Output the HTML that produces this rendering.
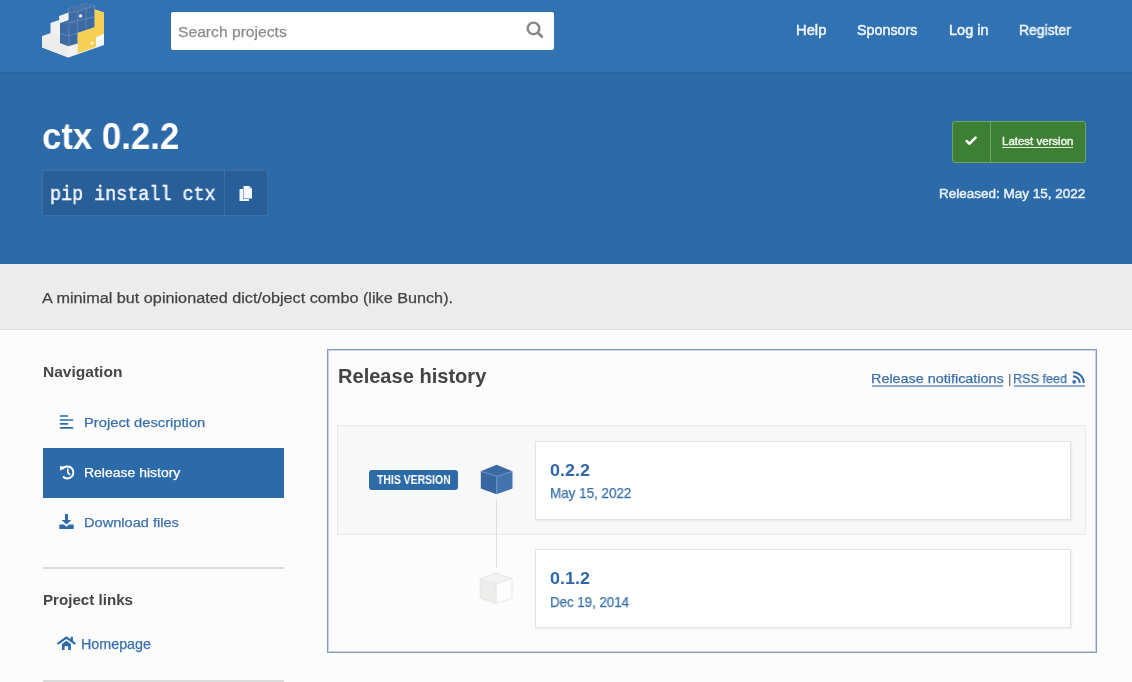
<!DOCTYPE html>
<html><head><meta charset="utf-8">
<style>
*{box-sizing:border-box;margin:0;padding:0}
html,body{width:1132px;height:682px;overflow:hidden;background:#fcfcfc;font-family:"Liberation Sans",sans-serif}
.abs{position:absolute}
.tx{position:absolute;white-space:nowrap;transform-origin:0 0;will-change:transform}
#hdr{left:0;top:0;width:1132px;height:72px;background:#3072b2}
#banner{left:0;top:72px;width:1132px;height:192px;background:#2d6aa8;border-top:1px solid #2b64a0}
#desc{left:0;top:264px;width:1132px;height:66px;background:#ececec;border-bottom:1px solid #e2e2e2}
#search{left:171px;top:12px;width:383px;height:38px;background:#fff;border-radius:2px}
#pip{left:42px;top:170px;width:226px;height:46px;background:#295f99;border:1px solid rgba(255,255,255,.1)}
#pip .d{position:absolute;left:181px;top:-1px;width:1px;height:46px;border-left:1px solid rgba(255,255,255,.1)}
#latest{left:952px;top:121px;width:134px;height:42px;background:#3e7f36;border:1px solid #6ea468;border-radius:3px}
#latest .d{position:absolute;left:37px;top:0;width:1px;height:40px;background:#6ea468}
#hl{left:43px;top:448px;width:241px;height:50px;background:#2d6aa9}
.rule{left:43px;width:241px;height:2px;background:#dcdcdc}
#panel{left:327px;top:349px;width:770px;height:304px;border:1px solid #809bb9;box-shadow:inset 0 0 0 1px rgba(150,175,200,.5);background:#fcfcfc}
#gbox{left:337px;top:425px;width:749px;height:110px;background:#f8f8f8;border:1px solid #e9e9e9}
.card{left:535px;width:536px;height:79px;background:#fff;border:1px solid #e3e3e3;box-shadow:1px 1px 2px rgba(0,0,0,.06)}
#badge{left:369px;top:470px;width:89px;height:20px;background:#2d6aa9;border-radius:3px}
#vline{left:496px;top:500px;width:1px;height:68px;background:#dedede}
.ul{position:absolute;height:1px}
</style></head><body>
<div id="hdr" class="abs"></div>
<svg class="abs" style="left:36px;top:0" width="76" height="62" viewBox="36 0 76 62">
  <polygon points="42.2,47.5 42,36.2 50.5,33.2 50.5,23 59.1,20 59.1,15.9 68.6,12.6 68.6,8.4 85.2,3.2 94.7,5.5 94.7,9.5 104,12.5 104,45 68.4,57.4" fill="#f1f1f1"/>
  <polygon points="42.2,47.5 42,36.2 50.5,33.2 59.1,36 60,43 68.2,46.3 68.4,57.4" fill="#ececec"/>
  <polygon points="68.6,8.4 85.2,3.2 94.7,5.5 94.7,27.3 77.7,33 77.7,43.5 68.2,46.3 60,43 60,23.2 68.6,20.2" fill="#3d6aa2"/>
  <polygon points="68.6,8.4 85.2,3.2 94.7,5.5 77.8,11.4" fill="#4873aa"/>
  <polygon points="60,23.2 68.6,20.2 77.7,23 69,26" fill="#4570a8"/>
  <g stroke="#6e96c6" stroke-width="0.7" fill="none" opacity="0.9">
    <path d="M77.7,11.4 V33 M86.1,8.5 V28 M68.8,26 V45.8 M68.6,12.8 L77.7,11.4 L94.7,5.8 M68.6,22.7 L94.7,16.8 M60,33.5 L68.8,36 L77.7,33.2"/>
  </g>
  <polygon points="94.7,9.5 104,12.5 104,34 96,37.2 96,46.7 77.7,53.5 77.7,33 94.7,27.3" fill="#f6cf55"/>
  <polygon points="96,37.2 104,34 104,44.5 96,47.2" fill="#f7f7f7"/>
  <circle cx="80.6" cy="15.9" r="1.7" fill="#eef3fa"/>
  <circle cx="92" cy="43.2" r="1.6" fill="#fff6d6"/>
</svg>
<div id="search" class="abs">
<svg style="position:absolute;left:352px;top:7px" width="20" height="20" viewBox="0 0 20 20"><circle cx="10.5" cy="9.4" r="5.8" fill="none" stroke="#878787" stroke-width="2.4"/><line x1="14.8" y1="13.8" x2="19" y2="17.8" stroke="#878787" stroke-width="2.6" stroke-linecap="round"/></svg>
</div>
<div id="banner" class="abs"></div>
<div id="pip" class="abs"><span class="d"></span>
<svg style="position:absolute;left:194px;top:13px" width="16" height="18" viewBox="0 0 16 18"><path d="M2.5 5 H6 V15 H12 V17 H2.5 Z" fill="#f4f7fb"/><path d="M6.5 2 H12 L15 5 V14.5 H6.5 Z" fill="#f4f7fb"/><path d="M12 2 V5 H15" fill="#d9e3ef"/></svg>
</div>
<div id="latest" class="abs"><span class="d"></span>
<svg style="position:absolute;left:11px;top:12px" width="14" height="14" viewBox="0 0 14 14"><path d="M2.6 7 L5.6 9.7 L11.6 3.6" fill="none" stroke="#fff" stroke-width="2.5" stroke-linecap="round" stroke-linejoin="round"/></svg>
</div>
<div class="ul" style="left:1002px;top:147px;width:71px;background:#dcebd8"></div>
<div id="desc" class="abs"></div>

<svg class="abs" style="left:58px;top:413px" width="17" height="17" viewBox="0 0 17 17"><g stroke="#2f6aa9" stroke-width="1.7" stroke-linecap="round"><line x1="2.5" y1="3" x2="9.5" y2="3"/><line x1="2.5" y1="7" x2="14.5" y2="7"/><line x1="2.5" y1="10.8" x2="9.5" y2="10.8"/><line x1="2.5" y1="14.8" x2="14.5" y2="14.8"/></g></svg>
<div id="hl" class="abs"></div>
<svg class="abs" style="left:58px;top:463px" width="18" height="18" viewBox="0 0 18 18"><path d="M4.3 6.2 A6 6 0 1 1 5 13.5" fill="none" stroke="#fff" stroke-width="2"/><path d="M1.8 3.2 L6.8 3.6 L2.4 8 Z" fill="#fff"/><path d="M9.8 6 V9.6 L11.6 11.4" fill="none" stroke="#fff" stroke-width="1.6" stroke-linecap="round"/></svg>
<svg class="abs" style="left:58px;top:513px" width="17" height="17" viewBox="0 0 17 17"><path d="M7 1 H10 V7 H13.4 L8.5 11.6 L3.6 7 H7 Z" fill="#2f6aa9"/><path d="M1.3 11.5 H6 L8.5 13.8 L11 11.5 H15.7 V16 H1.3 Z" fill="#2f6aa9"/></svg>
<div class="abs rule" style="top:567px"></div>
<svg class="abs" style="left:57px;top:634px" width="20" height="18" viewBox="0 0 20 18"><path d="M1.3 9.3 L9.4 3.6 L17.6 9.3" fill="none" stroke="#2f6aa9" stroke-width="2.2" stroke-linejoin="miter" stroke-linecap="round"/><rect x="13.6" y="2.8" width="2.3" height="4.8" fill="#2f6aa9"/><path d="M4.9 10 L9.4 6.8 L13.9 10 V16 H11.2 V12.2 H7.6 V16 H4.9 Z" fill="#2f6aa9"/></svg>
<div class="abs rule" style="top:680px"></div>

<div id="panel" class="abs"></div>
<div class="tx" style="left:1007.5px;top:371px;font-size:13.5px;line-height:16px;color:#5a5a5a">|</div>
<svg class="abs" style="left:1072px;top:371px" width="13" height="13" viewBox="0 0 13 13"><circle cx="2.2" cy="10.8" r="1.9" fill="#3a6ea8"/><path d="M1 5.2 A6.8 6.8 0 0 1 7.8 12" fill="none" stroke="#3a6ea8" stroke-width="2"/><path d="M1 1.2 A10.8 10.8 0 0 1 11.8 12" fill="none" stroke="#3a6ea8" stroke-width="2"/></svg>
<div class="ul" style="left:872px;top:385px;width:131px;height:2px;background:#8eabcf"></div>
<div class="ul" style="left:1014px;top:385px;width:71px;height:2px;background:#8eabcf"></div>
<div id="gbox" class="abs"></div>
<div id="badge" class="abs"></div>
<div id="vline" class="abs"></div>
<svg class="abs" style="left:479px;top:463px" width="36" height="33" viewBox="0 0 36 33"><polygon points="1.8,8.2 17.5,1.8 33.5,8.2 17.8,13.2" fill="#3c6aa3"/><polygon points="1.8,8.2 17.8,13.2 17.5,31.3 1.8,25.5" fill="#3766a0"/><polygon points="17.8,13.2 33.5,8.2 33.5,25.5 17.5,31.3" fill="#4473ad"/><path d="M2.5,8.6 L17.8,13.4 L33,8.6 M17.8,13.4 V30.8" fill="none" stroke="#6a94c6" stroke-width="0.9"/></svg>
<svg class="abs" style="left:479px;top:571px" width="36" height="36" viewBox="0 0 36 36"><polygon points="1.2,8.2 16.5,2 33,7.6 17.2,13.2" fill="#f2f2f1"/><polygon points="1.2,8.2 17.2,13.2 17.2,32.6 1.2,27" fill="#ededec"/><polygon points="17.2,13.2 33,7.6 33,27.3 17.2,32.6" fill="#fefefe"/><path d="M1.2,8.2 L16.5,2 L33,7.6 V27.3 L17.2,32.6 L1.2,27 Z M1.2,8.2 L17.2,13.2 L33,7.6 M17.2,13.2 V32.6" fill="none" stroke="#e2e2e2" stroke-width="0.8"/></svg>
<div class="abs card" style="top:441px"></div>
<div class="abs card" style="top:549px"></div>
<div class="tx" style="left:178.00px;top:24.01px;font-size:15.34px;line-height:15.34px;font-family:'Liberation Sans', sans-serif;font-weight:normal;color:#8b8b8b;-webkit-text-stroke:0.25px #8b8b8b;transform:scaleX(1.0213);">Search projects</div>
<div class="tx" style="left:796.00px;top:22.84px;font-size:14.30px;line-height:14.30px;font-family:'Liberation Sans', sans-serif;font-weight:normal;color:#f3f7fc;-webkit-text-stroke:0.45px #f3f7fc;transform:scaleX(1.0327);">Help</div>
<div class="tx" style="left:857.00px;top:22.84px;font-size:14.30px;line-height:14.30px;font-family:'Liberation Sans', sans-serif;font-weight:normal;color:#f3f7fc;-webkit-text-stroke:0.45px #f3f7fc;transform:scaleX(0.9984);">Sponsors</div>
<div class="tx" style="left:949.00px;top:22.84px;font-size:14.30px;line-height:14.30px;font-family:'Liberation Sans', sans-serif;font-weight:normal;color:#f3f7fc;-webkit-text-stroke:0.45px #f3f7fc;transform:scaleX(1.0142);">Log in</div>
<div class="tx" style="left:1019.00px;top:22.84px;font-size:14.30px;line-height:14.30px;font-family:'Liberation Sans', sans-serif;font-weight:normal;color:#f3f7fc;-webkit-text-stroke:0.45px #f3f7fc;transform:scaleX(0.9734);">Register</div>
<div class="tx" style="left:42.00px;top:119.13px;font-size:36.85px;line-height:36.85px;font-family:'Liberation Sans', sans-serif;font-weight:bold;color:#ffffff;transform:scaleX(0.9432);">ctx 0.2.2</div>
<div class="tx" style="left:50.00px;top:185.70px;font-size:19.60px;line-height:19.60px;font-family:'Liberation Mono', monospace;font-weight:normal;color:#f4f7fb;-webkit-text-stroke:0.45px #f4f7fb;transform:scaleX(0.9396);">pip install ctx</div>
<div class="tx" style="left:1002.00px;top:136.38px;font-size:10.77px;line-height:10.77px;font-family:'Liberation Sans', sans-serif;font-weight:normal;color:#eef6ec;-webkit-text-stroke:0.45px #eef6ec;transform:scaleX(1.0651);">Latest version</div>
<div class="tx" style="left:939.00px;top:187.95px;font-size:12.87px;line-height:12.87px;font-family:'Liberation Sans', sans-serif;font-weight:normal;color:#eaf1f9;-webkit-text-stroke:0.45px #eaf1f9;transform:scaleX(1.0489);">Released: May 15, 2022</div>
<div class="tx" style="left:42.00px;top:290.25px;font-size:15.23px;line-height:15.23px;font-family:'Liberation Sans', sans-serif;font-weight:normal;color:#434343;-webkit-text-stroke:0.25px #434343;transform:scaleX(1.0656);">A minimal but opinionated dict/object combo (like Bunch).</div>
<div class="tx" style="left:43.00px;top:364.25px;font-size:15.23px;line-height:15.23px;font-family:'Liberation Sans', sans-serif;font-weight:bold;color:#464646;transform:scaleX(1.0207);">Navigation</div>
<div class="tx" style="left:84.00px;top:416.19px;font-size:13.67px;line-height:13.67px;font-family:'Liberation Sans', sans-serif;font-weight:normal;color:#3a70ab;-webkit-text-stroke:0.25px #3a70ab;transform:scaleX(1.0798);">Project description</div>
<div class="tx" style="left:84.00px;top:466.19px;font-size:13.67px;line-height:13.67px;font-family:'Liberation Sans', sans-serif;font-weight:normal;color:#ffffff;-webkit-text-stroke:0.25px #ffffff;transform:scaleX(1.0230);">Release history</div>
<div class="tx" style="left:84.00px;top:516.19px;font-size:13.67px;line-height:13.67px;font-family:'Liberation Sans', sans-serif;font-weight:normal;color:#3a70ab;-webkit-text-stroke:0.25px #3a70ab;transform:scaleX(1.0678);">Download files</div>
<div class="tx" style="left:43.00px;top:593.10px;font-size:14.57px;line-height:14.57px;font-family:'Liberation Sans', sans-serif;font-weight:bold;color:#464646;transform:scaleX(1.0395);">Project links</div>
<div class="tx" style="left:81.00px;top:636.83px;font-size:14.17px;line-height:14.17px;font-family:'Liberation Sans', sans-serif;font-weight:normal;color:#3a70ab;-webkit-text-stroke:0.25px #3a70ab;transform:scaleX(1.0105);">Homepage</div>
<div class="tx" style="left:338.00px;top:367.36px;font-size:19.71px;line-height:19.71px;font-family:'Liberation Sans', sans-serif;font-weight:bold;color:#444444;transform:scaleX(1.0189);">Release history</div>
<div class="tx" style="left:871.00px;top:371.69px;font-size:13.30px;line-height:13.30px;font-family:'Liberation Sans', sans-serif;font-weight:normal;color:#3c6fa8;-webkit-text-stroke:0.25px #3c6fa8;transform:scaleX(1.0818);">Release notifications</div>
<div class="tx" style="left:1013.00px;top:371.69px;font-size:13.30px;line-height:13.30px;font-family:'Liberation Sans', sans-serif;font-weight:normal;color:#3c6fa8;-webkit-text-stroke:0.25px #3c6fa8;transform:scaleX(0.9512);">RSS feed</div>
<div class="tx" style="left:377.00px;top:474.89px;font-size:11.88px;line-height:11.88px;font-family:'Liberation Sans', sans-serif;font-weight:bold;color:#ffffff;transform:scaleX(0.8788);">THIS VERSION</div>
<div class="tx" style="left:550.00px;top:462.43px;font-size:17.37px;line-height:17.37px;font-family:'Liberation Sans', sans-serif;font-weight:bold;color:#2f69a7;transform:scaleX(1.0318);">0.2.2</div>
<div class="tx" style="left:550.00px;top:486.01px;font-size:14.10px;line-height:14.10px;font-family:'Liberation Sans', sans-serif;font-weight:normal;color:#3a70ab;-webkit-text-stroke:0.25px #3a70ab;transform:scaleX(0.9524);">May 15, 2022</div>
<div class="tx" style="left:550.00px;top:570.43px;font-size:17.37px;line-height:17.37px;font-family:'Liberation Sans', sans-serif;font-weight:bold;color:#2f69a7;transform:scaleX(1.0318);">0.1.2</div>
<div class="tx" style="left:550.00px;top:595.02px;font-size:14.10px;line-height:14.10px;font-family:'Liberation Sans', sans-serif;font-weight:normal;color:#3a70ab;-webkit-text-stroke:0.25px #3a70ab;transform:scaleX(0.9423);">Dec 19, 2014</div>
</body></html>
